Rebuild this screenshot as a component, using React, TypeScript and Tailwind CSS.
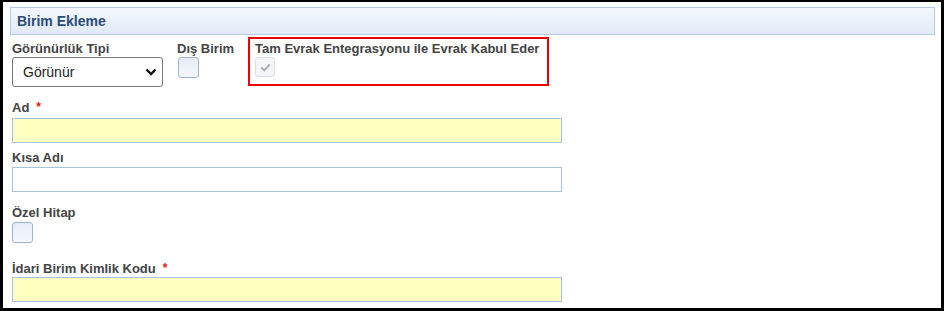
import React from "react";

const font = { fontFamily: '"Liberation Sans", Arial, sans-serif' };

function Label({ children, required }: { children: React.ReactNode; required?: boolean }) {
  return (
    <div className="h-[15px] text-[13px] leading-[15px] font-bold text-[#444444] whitespace-nowrap flex items-start">
      <span>{children}</span>
      {required && <span className="ml-[7px] text-[12px] leading-[12px] text-[#ee1111] relative top-[1px]">*</span>}
    </div>
  );
}

function Check({ disabled }: { disabled?: boolean }) {
  if (disabled) {
    return (
      <div className="w-[20px] h-[20px] rounded-[3px] border border-[#d9dee6] bg-[#f3f5f8] flex items-center justify-center">
        <svg width="11" height="9" viewBox="0 0 11 9">
          <path d="M1.2 4.6 L4.2 7.4 L9.8 1.4" fill="none" stroke="#a9adb3" strokeWidth="2" />
        </svg>
      </div>
    );
  }
  return (
    <div className="w-[21px] h-[21px] rounded-[3px] border border-[#9db3d6] bg-gradient-to-b from-[#e6edf8] to-[#f5f8fd]" />
  );
}

function TextInput({ yellow }: { yellow?: boolean }) {
  return (
    <div
      className={
        "w-[550px] h-[25px] border border-[#a9c1e3] " + (yellow ? "bg-[#ffffc2]" : "bg-white")
      }
    />
  );
}

export default function App() {
  return (
    <div
      style={font}
      className="w-[944px] h-[311px] overflow-hidden bg-white border-black border-t-2 border-l-[3px] border-r-[3px] border-b-[3px]"
    >
      <div className="pt-[5px] pl-[7px] pr-[6px]">
        <div className="h-[28px] border border-[#b7cbe6] bg-gradient-to-b from-[#f4f8fd] to-[#e1eaf7] flex items-center pl-[6px]">
          <span className="text-[14px] font-bold text-[#2b4b7b] leading-none">Birim Ekleme</span>
        </div>
      </div>

      <div className="pl-[9px]">
        <div className="mt-[2px] flex items-start">
          <div className="w-[151px] pt-[4px]">
            <Label>Görünürlük Tipi</Label>
            <div className="mt-[1px] h-[30px] rounded-[3px] border border-[#767676] bg-white flex items-center justify-between pl-[10px] pr-[5px]">
              <span className="text-[14px] text-[#222]">Görünür</span>
              <svg width="12" height="8" viewBox="0 0 12 8">
                <path d="M1.5 1.5 L6 6 L10.5 1.5" fill="none" stroke="#111" strokeWidth="2.4" />
              </svg>
            </div>
          </div>
          <div className="ml-[14px] w-[71px] pt-[4px]">
            <Label>Dış Birim</Label>
            <div className="mt-[1px] ml-[1px]">
              <Check />
            </div>
          </div>
          <div className="w-[301px] h-[49px] border-2 border-[#ee0000] pl-[5px] pt-[2px]">
            <Label>Tam Evrak Entegrasyonu ile Evrak Kabul Eder</Label>
            <div className="mt-[1px]">
              <Check disabled />
            </div>
          </div>
        </div>

        <div className="mt-[13px]">
          <Label required>Ad</Label>
          <div className="mt-[3px]">
            <TextInput yellow />
          </div>
        </div>

        <div className="mt-[7px]">
          <Label>Kısa Adı</Label>
          <div className="mt-[2px]">
            <TextInput />
          </div>
        </div>

        <div className="mt-[13px]">
          <Label>Özel Hitap</Label>
          <div className="mt-[2px]">
            <Check />
          </div>
        </div>

        <div className="mt-[18px]">
          <Label required>İdari Birim Kimlik Kodu</Label>
          <div className="mt-[1px]">
            <TextInput yellow />
          </div>
        </div>
      </div>
    </div>
  );
}
